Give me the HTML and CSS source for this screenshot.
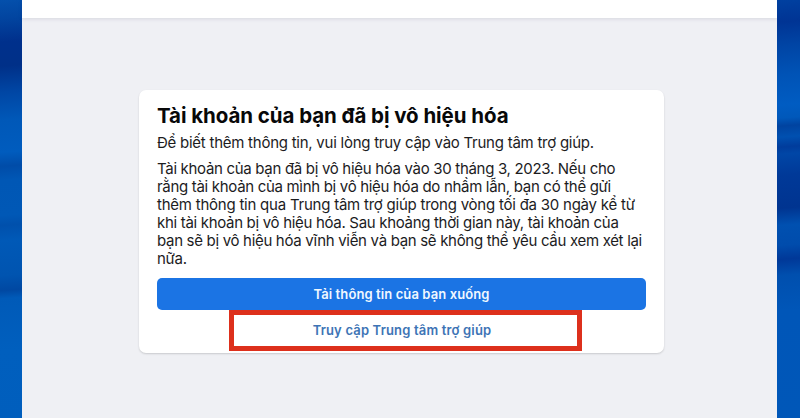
FILE: index.html
```html
<!DOCTYPE html>
<html lang="vi">
<head>
    <meta charset="UTF-8">
    <title>Tài khoản của bạn đã bị vô hiệu hóa</title>
    <meta name="viewport" content="width=device-width, initial-scale=1.0">
    <link rel="stylesheet" href="styles.css">
</head>
<body>
    <div class="side side-left"></div>
    <div class="page">
        <div class="topbar"></div>
        <div class="card">
            <h1>Tài khoản của bạn đã bị vô hiệu hóa</h1>
            <p class="intro">Để biết thêm thông tin, vui lòng truy cập vào Trung tâm trợ giúp.</p>
            <p class="details">
                Tài khoản của bạn đã bị vô hiệu hóa vào 30 tháng 3, 2023. Nếu cho<br>
                rằng tài khoản của mình bị vô hiệu hóa do nhầm lẫn, bạn có thể gửi<br>
                <span class="loose">thêm thông tin qua Trung tâm trợ giúp trong vòng tối đa 30 ngày kể từ</span><br>
                khi tài khoản bị vô hiệu hóa. Sau khoảng thời gian này, tài khoản của<br>
                bạn sẽ bị vô hiệu hóa vĩnh viễn và bạn sẽ không thể yêu cầu xem xét lại<br>
                nữa.
            </p>
            <button class="download-btn">Tải thông tin của bạn xuống</button>
            <a class="help-link" href="#">Truy cập Trung tâm trợ giúp</a>
        </div>
    </div>
    <div class="side side-right"></div>
</body>
</html>
```

FILE: styles.css
```css
* {
    box-sizing: border-box;
}
body {
    font-family: Inter, "Liberation Sans", sans-serif;
    margin: 0;
    display: grid;
    grid-template-columns: 22px 1fr 23px;
    height: 418px;
    overflow: hidden;
    color: #1c1c1e;
}
.side-left {
    background: linear-gradient(176deg, #0450ac 0, #0245a0 18px, #00308c 42px, #003088 66px, #0046a4 92px, #0058b8 120px, #005cbe 152px, #004ca8 166px, #0057b5 180px, #0058b6 215px, #0050ac 225px, #0059b7 240px, #0054b0 275px, #0048a2 290px, #005ab8 298px, #005fbe 350px, #005ebd 100%);
}
.side-right {
    background: linear-gradient(176deg, #0040a0 0, #003494 22px, #0044a4 45px, #0053b6 75px, #005cc2 105px, #0058ba 118px, #0043a0 126px, #0050b0 137px, #003c9c 147px, #0046a6 154px, #003998 175px, #003490 208px, #0050b0 225px, #004cac 245px, #003898 259px, #004fae 275px, #0056b8 310px, #0057b8 100%);
}
.page {
    background-color: #eff0f4;
}
.topbar {
    height: 18px;
    background: white;
    box-shadow: 0 1px 4px rgba(40, 30, 80, 0.12);
}
.card {
    width: 525px;
    height: 263px;
    margin: 72px 0 0 117px;
    padding: 13px 18px 0;
    background: white;
    border-radius: 7px;
    box-shadow: 0 1px 2px rgba(0, 0, 0, 0.16);
}
h1 {
    font-size: 20.5px;
    line-height: 26px;
    font-weight: 700;
    letter-spacing: -0.06px;
    margin: 0;
    color: #080809;
    white-space: nowrap;
}
.intro,
.details {
    margin: 0;
    font-size: 15px;
    line-height: 18px;
    white-space: nowrap;
}
.intro {
    margin-top: 5px;
    letter-spacing: -0.25px;
}
.details {
    margin-top: 8px;
    letter-spacing: -0.31px;
}
.loose {
    letter-spacing: -0.23px;
}
.download-btn {
    display: block;
    width: 489px;
    height: 32px;
    margin-top: 10px;
    padding: 0;
    border: none;
    border-radius: 5px;
    background-color: #1b74e4;
    color: #f0f8ff;
    font-family: inherit;
    font-size: 13px;
    font-weight: 600;
    letter-spacing: 0.1px;
}
.help-link {
    display: flex;
    align-items: center;
    justify-content: center;
    width: 353px;
    height: 41px;
    margin-left: 72px;
    padding: 0 7px 2px 0;
    border: 5px solid #dd301c;
    color: #3d74b5;
    font-size: 13px;
    font-weight: 600;
    letter-spacing: 0.17px;
    text-decoration: none;
}
```
